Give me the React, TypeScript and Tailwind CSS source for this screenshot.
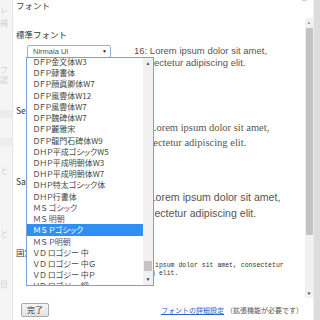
import React from "react";

const JP = "font-['Noto_Sans_CJK_JP',sans-serif]";

const FONTS = [
  "ＤＦＰ金文体W3",
  "ＤＦＰ隷書体",
  "ＤＦＰ顏眞卿体W7",
  "ＤＦＰ風雲体W12",
  "ＤＦＰ風雲体W7",
  "ＤＦＰ魏碑体W7",
  "ＤＦＰ麗雅宋",
  "ＤＦＰ龍門石碑体W9",
  "ＤＨＰ平成ゴシックW5",
  "ＤＨＰ平成明朝体W3",
  "ＤＨＰ平成明朝体W7",
  "ＤＨＰ特太ゴシック体",
  "ＤＨＰ行書体",
  "ＭＳ ゴシック",
  "ＭＳ 明朝",
  "ＭＳ Ｐゴシック",
  "ＭＳ Ｐ明朝",
  "ＶＤ ロゴジー 中",
  "ＶＤ ロゴジー 中Ｇ",
  "ＶＤ ロゴジー 中Ｐ",
  "ＶＤ ロゴジー 細",
];

const SELECTED = "ＭＳ Ｐゴシック";

function FakeSelect({ label }: { label: string }) {
  return (
    <div className="flex h-[12.5px] w-[84px] shrink-0 items-center justify-between rounded-[2px] border border-[#8fb0e3] bg-white pl-[5px] pr-[3px]">
      <span className="font-['Liberation_Sans',sans-serif] text-[7.5px] leading-none text-[#555]">{label}</span>
      <span className="text-[5px] leading-none text-[#222]">▼</span>
    </div>
  );
}

function FontList() {
  return (
    <div className="absolute left-[13px] top-[57px] z-10 flex h-[229px] w-[128px] overflow-hidden border border-[#7d9fd6] bg-white">
      <div className="flex-1 overflow-hidden">
        <div className="-mt-[2px] flex flex-col">
          {FONTS.map((f) => {
            const sel = f === SELECTED;
            const ms = f.startsWith("ＭＳ");
            return (
              <div
                key={f}
                className={`h-[11.22px] whitespace-nowrap pl-[6px] ${JP} text-[8px] leading-[11.22px] [font-feature-settings:'palt'] ${
                  sel ? "bg-[#2f8ff3] text-white" : ms ? "text-[#5b4a66]" : "text-[#3d4a42]"
                }`}
              >
                {f}
              </div>
            );
          })}
        </div>
      </div>
      <div className="flex w-[10px] flex-col items-center bg-[#f0f0f0]">
        <span className="mt-[3px] text-[5px] leading-none text-[#606060]">▲</span>
        <div className="flex-1" />
        <div className="h-[10px] w-[8px] bg-[#c3c3c3]" />
        <div className="h-[6px]" />
        <span className="mb-[3px] text-[5px] leading-none text-[#404040]">▼</span>
      </div>
    </div>
  );
}

export default function App() {
  return (
    <div className="flex h-[320px] w-[320px] overflow-hidden bg-white">
      {/* faded page behind the dialog */}
      <div className={`flex w-[13px] shrink-0 flex-col border-r border-[#e4e4e4] bg-[#f5f5f5] ${JP} text-[8px] leading-[10px] text-[#d2d2d2]`}>
        <span className="mt-[5px]">レ</span>
        <span className="mt-[3px]">補</span>
        <span className="mt-[37px]">フ</span>
        <span>認</span>
        <div className="mt-[25px] h-[8px] bg-[#ececec]" />
        <div className="mt-[20px] h-[8px] bg-[#ededed]" />
        <span className="mt-[20px]">と</span>
        <span className="mt-[53px]">と</span>
        <span className="mt-[40px]">目</span>
      </div>

      <div className="relative flex w-[300px] shrink-0 flex-col bg-white">
        {/* header */}
        <div className="flex h-[18px] items-start justify-between pl-[3px] pr-[7px]">
          <span className={`${JP} text-[8.5px] leading-[10px] text-[#444]`}>フォント</span>
          <span className="-mt-[5px] font-['Liberation_Sans',sans-serif] text-[8px] leading-none text-[#777]">x</span>
        </div>

        {/* scrolling body */}
        <div className="flex h-[280px]">
          <div className="flex flex-1 flex-col pl-[3px]">
            <div className={`mt-[10px] ${JP} text-[8.5px] leading-[12px] text-[#333]`}>標準フォント</div>
            <div className="mt-[5px] flex items-start">
              <div className="ml-[11px]">
                <FakeSelect label="Nirmala UI" />
              </div>
              <p className="ml-[23px] w-[150px] font-['Liberation_Sans',sans-serif] text-[9.5px] leading-[12.3px] text-[#555]">
                16: Lorem ipsum dolor sit amet, consectetur adipiscing elit.
              </p>
            </div>

            <div className={`mt-[34px] ${JP} text-[8.5px] leading-[12px] text-[#333]`}>Serif フォント</div>
            <div className="mt-[4.5px] flex items-start">
              <div className="ml-[11px]">
                <FakeSelect label="Times New Roman" />
              </div>
              <p className="ml-[23px] w-[150px] font-['Liberation_Serif',serif] text-[10.5px] leading-[15px] text-[#555]">
                16: Lorem ipsum dolor sit amet, consectetur adipiscing elit.
              </p>
            </div>

            <div className={`mt-[24.5px] ${JP} text-[8.5px] leading-[12px] text-[#333]`}>Sans-serif フォント</div>
            <div className="mt-[2px] flex items-start">
              <div className="ml-[11px]">
                <FakeSelect label="Arial" />
              </div>
              <p className="ml-[21px] w-[150px] font-['Liberation_Sans',sans-serif] text-[10.6px] leading-[16px] text-[#555]">
                16: Lorem ipsum dolor sit amet, consectetur adipiscing elit.
              </p>
            </div>

            <div className={`mt-[25px] ${JP} text-[8.5px] leading-[12px] text-[#333]`}>固定幅フォント</div>
            <div className="mt-[4px] flex items-start">
              <div className="ml-[11px]">
                <FakeSelect label="Consolas" />
              </div>
              <p className="ml-[5px] w-[172px] font-['Liberation_Mono',monospace] text-[6.5px] leading-[8px] text-[#333]">
                13: Lorem ipsum dolor sit amet, consectetur adipiscing elit.
              </p>
            </div>
          </div>

          {/* page scrollbar */}
          <div className="mr-[0px] flex w-[8px] flex-col items-center bg-[#f1f1f1]">
            <span className="mt-[2px] text-[4.5px] leading-none text-[#999]">▲</span>
            <div className="mt-[3px] h-[207px] w-[7px] bg-[#c3c3c3]" />
            <div className="flex-1" />
            <span className="mb-[3px] text-[4.5px] leading-none text-[#333]">▼</span>
          </div>
        </div>

        {/* footer */}
        <div className="flex items-start pt-[5px]">
          <button
            type="button"
            className={`ml-[8px] flex h-[14px] w-[28px] items-center justify-center rounded-[2px] border border-[#a9a9a9] bg-gradient-to-b from-[#f6f6f6] to-[#e2e2e2] ${JP} text-[8px] leading-none text-[#333]`}
          >
            完了
          </button>
          <div className={`ml-[112px] mt-[3px] flex ${JP} text-[7px] leading-[9px]`}>
            <span className="text-[#2a62d0] underline">フォントの詳細設定</span>
            <span className="ml-[2px] text-[#555]">（拡張機能が必要です）</span>
          </div>
        </div>

        <FontList />
      </div>

      <div className="w-[7px] shrink-0 border-l border-[#ededed] bg-[#dddddd]" />
    </div>
  );
}
